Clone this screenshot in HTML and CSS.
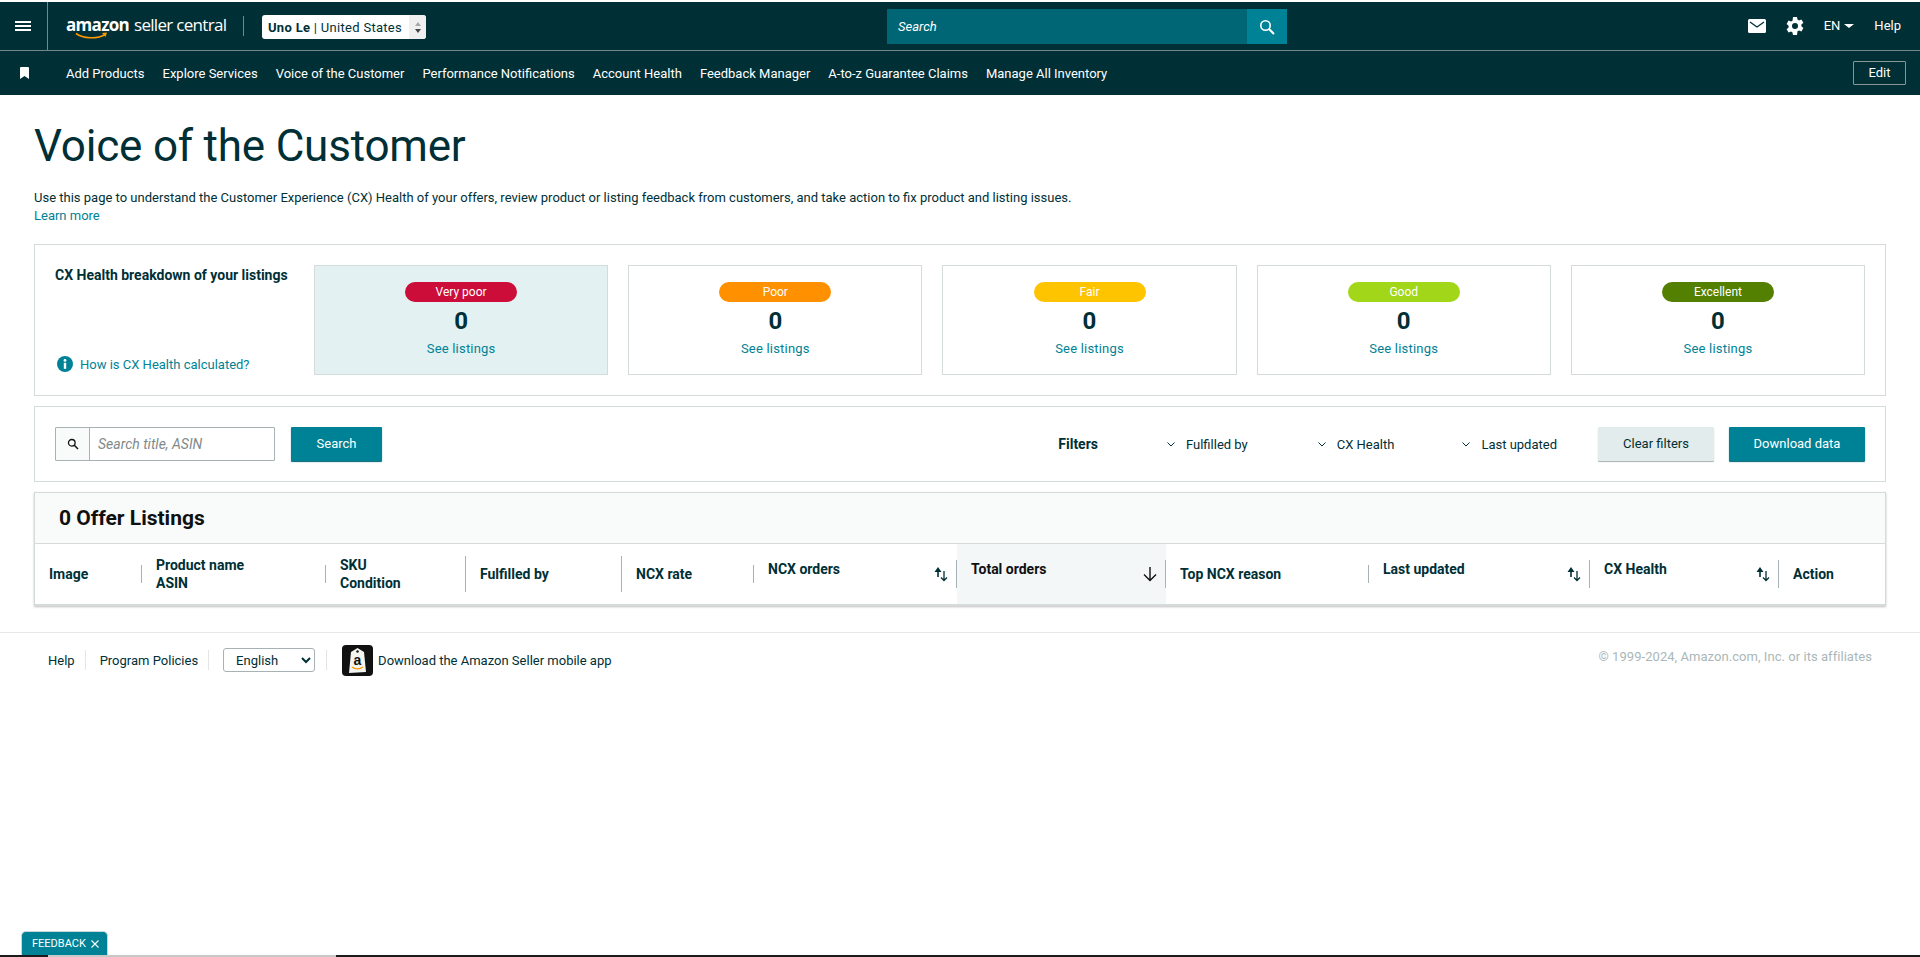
FILE: index.html
```html
<!DOCTYPE html>
<html lang="en">
<head>
<meta charset="utf-8">
<title>Voice of the Customer</title>
<link rel="stylesheet" href="styles.css">
</head>
<body>
<header class="topbar">
  <div class="menu-cell">
    <svg class="menu-icon" width="16" height="12" viewBox="0 0 16 12"><path d="M0 1h16v2H0zM0 5h16v2H0zM0 9h16v2H0z" fill="#fff"/></svg>
  </div>
  <div class="logo">
    <span class="logo-amazon">amazon</span><span class="logo-seller">seller central</span>
    <svg class="logo-smile" width="34" height="8" viewBox="0 0 34 8"><path d="M1 1.5C8 6.500 22 7.500 30 2.500" fill="none" stroke="#f90" stroke-width="1.600"/><path d="M27 1l5-.5-1.500 4.500z" fill="#f90"/></svg>
  </div>
  <div class="logo-sep"></div>
  <div class="account">
    <span class="account-text"><b>Uno Le</b> | United States</span>
    <span class="spinner"><i class="sp-up"></i><i class="sp-down"></i></span>
  </div>
  <div class="global-search">
    <div class="gs-input">Search</div>
    <div class="gs-btn">
      <svg width="16" height="16" viewBox="0 0 16 16"><circle cx="6.500" cy="6.500" r="4.700" fill="none" stroke="#fff" stroke-width="1.600"/><path d="M10 10l5 5" stroke="#fff" stroke-width="2"/></svg>
    </div>
  </div>
  <div class="top-right">
    <svg class="tr-mail" width="18" height="14" viewBox="0 0 18 14"><rect width="18" height="14" rx="1.500" fill="#fff"/><path d="M2 3l7 5 7-5" fill="none" stroke="#002f36" stroke-width="1.300"/></svg>
    <svg class="tr-gear" width="18" height="18" viewBox="0 0 18 18"><path fill="#fff" fill-rule="evenodd" d="M7 0h4l.5 2.600 1.500.8 2.400-1 2 3.400-2 1.700v1.800l2 1.700-2 3.400-2.400-1-1.500.8L11 18H7l-.5-2.600-1.500-.8-2.400 1-2-3.400 2-1.700V8.700l-2-1.700 2-3.400 2.400 1 1.500-.8zM9 6a3 3 0 1 0 0 6 3 3 0 0 0 0-6z"/></svg>
    <span class="tr-lang">EN<i class="caret"></i></span>
    <span class="tr-help">Help</span>
  </div>
</header>
<nav class="navbar">
  <svg class="bookmark" width="9" height="12" viewBox="0 0 9 12"><path d="M0 1a1 1 0 0 1 1-1h7a1 1 0 0 1 1 1v11L4.500 9 0 12z" fill="#fff"/></svg>
  <ul class="nav-list">
    <li>Add Products</li>
    <li>Explore Services</li>
    <li>Voice of the Customer</li>
    <li>Performance Notifications</li>
    <li>Account Health</li>
    <li>Feedback Manager</li>
    <li>A-to-z Guarantee Claims</li>
    <li>Manage All Inventory</li>
  </ul>
  <span class="edit-btn">Edit</span>
</nav>
<main class="page">
  <h1 class="title">Voice of the Customer</h1>
  <p class="intro">Use this page to understand the Customer Experience (CX) Health of your offers, review product or listing feedback from customers, and take action to fix product and listing issues.<br><a class="link">Learn more</a></p>
  <section class="panel health">
    <div class="health-side">
      <div class="health-title">CX Health breakdown of your listings</div>
      <div class="health-how">
        <svg width="16" height="16" viewBox="0 0 16 16"><circle cx="8" cy="8" r="8" fill="#008296"/><rect x="6.800" y="6.800" width="2.400" height="6" fill="#fff"/><circle cx="8" cy="4.400" r="1.400" fill="#fff"/></svg>
        <a class="link">How is CX Health calculated?</a>
      </div>
    </div>
    <div class="hcard hcard-active"><span class="pill pill-vp">Very poor</span><span class="hcount">0</span><a class="link">See listings</a></div>
    <div class="hcard"><span class="pill pill-poor">Poor</span><span class="hcount">0</span><a class="link">See listings</a></div>
    <div class="hcard"><span class="pill pill-fair">Fair</span><span class="hcount">0</span><a class="link">See listings</a></div>
    <div class="hcard"><span class="pill pill-good">Good</span><span class="hcount">0</span><a class="link">See listings</a></div>
    <div class="hcard"><span class="pill pill-exc">Excellent</span><span class="hcount">0</span><a class="link">See listings</a></div>
  </section>
  <section class="panel filters">
    <div class="fsearch">
      <span class="fsearch-icon"><svg width="12" height="12" viewBox="0 0 12 12"><circle cx="4.800" cy="4.800" r="3.300" fill="none" stroke="#111" stroke-width="1.300"/><path d="M7.300 7.300l3.700 3.700" stroke="#111" stroke-width="1.500"/></svg></span>
      <span class="fsearch-input">Search title, ASIN</span>
    </div>
    <span class="btn btn-primary btn-search">Search</span>
    <span class="filters-label">Filters</span>
    <span class="fdrop fdrop-a"><svg class="chev" width="8" height="5" viewBox="0 0 8 5"><path d="M.5.500L4 4 7.500.500" fill="none" stroke="#002f36"/></svg>Fulfilled by</span>
    <span class="fdrop fdrop-b"><svg class="chev" width="8" height="5" viewBox="0 0 8 5"><path d="M.5.500L4 4 7.500.500" fill="none" stroke="#002f36"/></svg>CX Health</span>
    <span class="fdrop fdrop-c"><svg class="chev" width="8" height="5" viewBox="0 0 8 5"><path d="M.5.500L4 4 7.500.500" fill="none" stroke="#002f36"/></svg>Last updated</span>
    <span class="btn btn-light">Clear filters</span>
    <span class="btn btn-primary btn-download">Download data</span>
  </section>
  <section class="listings">
    <h2 class="listings-title">0 Offer Listings</h2>
    <div class="thead">
      <div class="th"><span class="th-text">Image</span><i class="sep"></i></div>
      <div class="th"><span class="th-text">Product name<br>ASIN</span><i class="sep"></i></div>
      <div class="th"><span class="th-text">SKU<br>Condition</span><i class="sep sep-tall"></i></div>
      <div class="th"><span class="th-text">Fulfilled by</span><i class="sep sep-tall"></i></div>
      <div class="th"><span class="th-text">NCX rate</span><i class="sep"></i></div>
      <div class="th"><span class="th-text th-up">NCX orders</span><svg class="sort" width="14" height="16" viewBox="0 0 14 16"><path d="M4 1L.5 6h2.700v5h1.600V6h2.700z" fill="#002f36"/><path d="M10 5v9M7 11.500l3 3 3-3" fill="none" stroke="#002f36" stroke-width="1.300"/></svg><i class="sep sep-mid"></i></div>
      <div class="th th-sorted"><span class="th-text th-up">Total orders</span><svg class="sort" width="14" height="16" viewBox="0 0 14 16"><path d="M7 1v13.500M1 8.500l6 6 6-6" fill="none" stroke="#111" stroke-width="1.400"/></svg><i class="sep sep-mid"></i></div>
      <div class="th"><span class="th-text">Top NCX reason</span><i class="sep"></i></div>
      <div class="th"><span class="th-text th-up">Last updated</span><svg class="sort" width="14" height="16" viewBox="0 0 14 16"><path d="M4 1L.5 6h2.700v5h1.600V6h2.700z" fill="#002f36"/><path d="M10 5v9M7 11.500l3 3 3-3" fill="none" stroke="#002f36" stroke-width="1.300"/></svg><i class="sep sep-mid"></i></div>
      <div class="th"><span class="th-text th-up">CX Health</span><svg class="sort" width="14" height="16" viewBox="0 0 14 16"><path d="M4 1L.5 6h2.700v5h1.600V6h2.700z" fill="#002f36"/><path d="M10 5v9M7 11.500l3 3 3-3" fill="none" stroke="#002f36" stroke-width="1.300"/></svg><i class="sep sep-mid"></i></div>
      <div class="th"><span class="th-text">Action</span></div>
    </div>
  </section>
</main>
<footer class="footer">
  <span class="f-link">Help</span><i class="f-sep"></i>
  <span class="f-link">Program Policies</span><i class="f-sep"></i>
  <select class="f-select"><option>English</option></select><i class="f-sep"></i>
  <svg class="f-app" width="31" height="31" viewBox="0 0 31 31"><rect width="31" height="31" rx="4" fill="#111"/><path d="M9 7l6.500-4L22 7l2 20-17 1z" fill="#f4f4f0"/><circle cx="15.500" cy="6.500" r="1.200" fill="#111"/><text x="15.500" y="20" text-anchor="middle" font-family="Liberation Sans, sans-serif" font-weight="700" font-size="14" fill="#111">a</text><path d="M10 22c3 2.500 8 2.500 11 0" fill="none" stroke="#f90" stroke-width="1.400"/></svg>
  <span class="f-link f-app-text">Download the Amazon Seller mobile app</span>
  <span class="f-copy">© 1999-2024, Amazon.com, Inc. or its affiliates</span>
</footer>
<div class="feedback">FEEDBACK<svg width="8" height="8" viewBox="0 0 8 8"><path d="M.5.500l7 7M7.500.500l-7 7" stroke="#fff" stroke-width="1.100"/></svg></div>
<div class="strip"><i class="strip-a"></i><i class="strip-b"></i><i class="strip-c"></i></div>
</body>
</html>
```

FILE: styles.css
```css
* { box-sizing: border-box; }
html, body { margin: 0; padding: 0; background: #fff; }
body {
  font-family: Roboto, "Liberation Sans", Arial, sans-serif;
  font-size: 13px;
  color: #002f36;
  padding-top: 2px;
  height: 957px;
  overflow: hidden;
}
i { font-style: normal; display: block; }
.topbar {
  height: 49px;
  background: #002f36;
  border-bottom: 1px solid #74888c;
  display: flex;
  align-items: stretch;
  color: #fff;
}
.menu-cell {
  width: 48px;
  border-right: 1px solid #74888c;
  display: flex;
  align-items: center;
  justify-content: center;
  padding-right: 1px;
}
.logo {
  margin-left: 18px;
  width: 162px;
  position: relative;
  line-height: 46px;
  white-space: nowrap;
}
.logo-amazon { font-family: "Open Sans", sans-serif; font-weight: 700; font-size: 17px; letter-spacing: -.7px; }
.logo-seller { font-family: "Open Sans", sans-serif; font-size: 17px; margin-left: 5px; letter-spacing: -.7px; }
.logo-smile { position: absolute; left: 9px; top: 30px; }
.logo-sep { width: 1px; height: 20px; background: #74888c; align-self: center; margin-left: 15px; }
.account {
  margin-left: 18px;
  align-self: center;
  margin-top: 2px;
  width: 164px;
  height: 24px;
  background: #fff;
  border-radius: 3px;
  color: #002f36;
  display: flex;
  align-items: center;
  padding-left: 6px;
  justify-content: space-between;
  font-size: 13px;
  letter-spacing: .3px;
}
.account-text { white-space: nowrap; }
.spinner {
  width: 17px;
  height: 100%;
  background: #f0f0f0;
  border-radius: 0 3px 3px 0;
  display: flex;
  flex-direction: column;
  align-items: center;
  justify-content: center;
  gap: 3px;
}
.sp-up { width: 0; height: 0; border: 3.500px solid transparent; border-top: 0; border-bottom: 4px solid #a8a8a8; }
.sp-down { width: 0; height: 0; border: 3.500px solid transparent; border-bottom: 0; border-top: 4px solid #444; }
.global-search {
  margin-left: 461px;
  margin-top: 7px;
  height: 35px;
  width: 400px;
  display: flex;
}
.gs-input {
  flex: 1;
  background: #006574;
  font-style: italic;
  line-height: 35px;
  padding-left: 11px;
  color: #fff;
}
.gs-btn {
  width: 40px;
  background: #008296;
  display: flex;
  align-items: center;
  justify-content: center;
}
.top-right {
  flex: 1;
  display: flex;
  align-items: center;
  justify-content: flex-end;
  padding-right: 19px;
  padding-bottom: 1px;
}
.tr-mail { margin-right: 20px; }
.tr-gear { margin-right: 20px; }
.tr-lang { display: flex; align-items: center; margin-right: 20px; }
.caret { width: 0; height: 0; border: 5px solid transparent; border-bottom: 0; border-top: 4px solid #fff; margin-left: 4px; }
.navbar {
  height: 44px;
  background: #002f36;
  color: #fff;
  display: flex;
  align-items: center;
  padding: 0 14px 0 20px;
}
.bookmark { margin-top: -1px; }
.nav-list {
  list-style: none;
  margin: 0 0 0 37px;
  padding: 1px 0 0;
  display: flex;
  gap: 18px;
  flex: 1;
}
.edit-btn {
  width: 53px;
  height: 24px;
  border: 1px solid #879596;
  border-radius: 1px;
  text-align: center;
  line-height: 22px;
}
.page { padding: 0 34px; }
.title {
  margin: 0;
  padding-top: 26px;
  font-size: 44px;
  line-height: 50px;
  font-weight: 400;
  letter-spacing: -.2px;
}
.intro { margin: 0; padding-top: 18px; line-height: 18px; }
.link { color: #008296; }
.panel { border: 1px solid #d5dbdb; }
.health {
  margin-top: 19px;
  height: 152px;
  padding: 20px;
  display: flex;
  gap: 20px;
}
.health-side {
  width: 239px;
  flex: none;
  display: flex;
  flex-direction: column;
  justify-content: space-between;
}
.health-title { font-weight: 700; font-size: 14px; padding-top: 1px; line-height: 18px; white-space: nowrap; }
.health-how { display: flex; align-items: center; gap: 7px; padding-left: 2px; padding-bottom: 3px; }
.hcard {
  flex: 1;
  border: 1px solid #d5dbdb;
  display: flex;
  flex-direction: column;
  align-items: center;
  padding-top: 16px;
}
.hcard-active { background: #e3f1f2; }
.pill {
  width: 112px;
  height: 20px;
  border-radius: 10px;
  text-align: center;
  line-height: 20px;
  color: #fff;
  font-size: 12px;
}
.pill-vp { background: #cc0c39; }
.pill-poor { background: #ff9000; }
.pill-fair { background: #ffc400; }
.pill-good { background: #a2d719; }
.pill-exc { background: #538000; }
.hcount { font-size: 24px; font-weight: 700; line-height: 28px; margin-top: 5px; }
.hcard .link { margin-top: 5px; line-height: 18px; letter-spacing: .2px; }
.filters {
  margin-top: 10px;
  height: 76px;
  display: flex;
  align-items: center;
  padding: 0 20px;
}
.fsearch {
  width: 220px;
  height: 34px;
  border: 1px solid #a6b2b3;
  border-radius: 1px;
  display: flex;
}
.fsearch-icon {
  width: 34px;
  background: #f9fafa;
  border-right: 1px solid #a6b2b3;
  display: flex;
  align-items: center;
  justify-content: center;
}
.fsearch-input { padding-left: 8px; line-height: 32px; font-size: 14px; font-style: italic; color: #7f8a8b; }
.btn {
  height: 34px;
  line-height: 34px;
  text-align: center;
  border-radius: 1px;
  display: block;
}
.btn-primary { background: #008296; color: #fff; box-shadow: 0 1px 1px #00626f; }
.btn-light { background: #e3ecec; color: #002f36; width: 116px; box-shadow: 0 1px 1px #a6b2b3; margin-left: 41px; }
.btn-search { width: 91px; margin-left: 16px; }
.btn-download { width: 136px; margin-left: 15px; }
.filters-label { font-weight: 700; font-size: 14px; margin-left: auto; }
.fdrop { display: flex; align-items: center; white-space: nowrap; }
.chev { margin-right: 11px; }
.fdrop-a { margin-left: 69px; }
.fdrop-b { margin-left: 70px; }
.fdrop-c { margin-left: 68px; }
.listings {
  margin-top: 10px;
  border: 1px solid #d5dbdb;
  border-bottom: 0;
  box-shadow: 0 1px 2px rgba(0, 0, 0, .25);
}
.listings-title {
  margin: 0;
  height: 51px;
  background: #f9fafa;
  border-bottom: 1px solid #d5dbdb;
  padding-left: 24px;
  font-size: 21px;
  line-height: 50px;
  font-weight: 700;
  color: #0f1111;
}
.thead {
  height: 62px;
  border-bottom: 2px solid #d5dbdb;
  display: grid;
  grid-template-columns: 107px 184px 140px 156px 132px 203px 209px 203px 221px 189px 1fr;
}
.th {
  display: flex;
  align-items: center;
  padding-left: 14px;
  font-weight: 700;
  font-size: 14px;
  line-height: 18px;
}
.th-text { flex: 1; white-space: nowrap; }
.th-up { align-self: flex-start; padding-top: 16px; }
.th-sorted { background: #f3f7f7; color: #0f1111; }
.sort { margin-right: 8px; }
.sep { width: 1px; height: 18px; background: #a6b2b3; flex: none; }
.sep-mid { height: 28px; }
.sep-tall { height: 36px; }
.footer {
  margin-top: 26px;
  border-top: 1px solid #e7e7e7;
  height: 55px;
  display: flex;
  align-items: center;
  padding: 0 48px;
}
.f-link { white-space: nowrap; }
.f-sep { width: 1px; height: 20px; background: #e3e6e6; margin: 0 14px 0 10px; }
.f-select {
  width: 92px;
  height: 24px;
  border: 1px solid #a6b2b3;
  border-radius: 3px;
  background: #fff;
  color: #002f36;
  font: inherit;
  padding-left: 8px;
  margin-right: 1px;
}
.f-app { margin: 0 5px 0 1px; }
.f-copy { margin-left: auto; margin-top: -8px; color: #aab7b8; white-space: nowrap; letter-spacing: .05px; }
.feedback {
  position: fixed;
  left: 21px;
  bottom: 2px;
  width: 87px;
  height: 24px;
  background: #008296;
  border: 1px solid #c8d8da;
  border-bottom: 0;
  border-radius: 5px 5px 0 0;
  color: #fff;
  font-size: 11px;
  display: flex;
  align-items: center;
  gap: 5px;
  padding-left: 10px;
}
.strip {
  position: fixed;
  left: 0;
  right: 0;
  bottom: 0;
  height: 2px;
  display: flex;
}
.strip-a { width: 48px; background: #1a1a1a; }
.strip-b { width: 288px; background: #c8c8c8; }
.strip-c { flex: 1; background: #1a1a1a; }
```
